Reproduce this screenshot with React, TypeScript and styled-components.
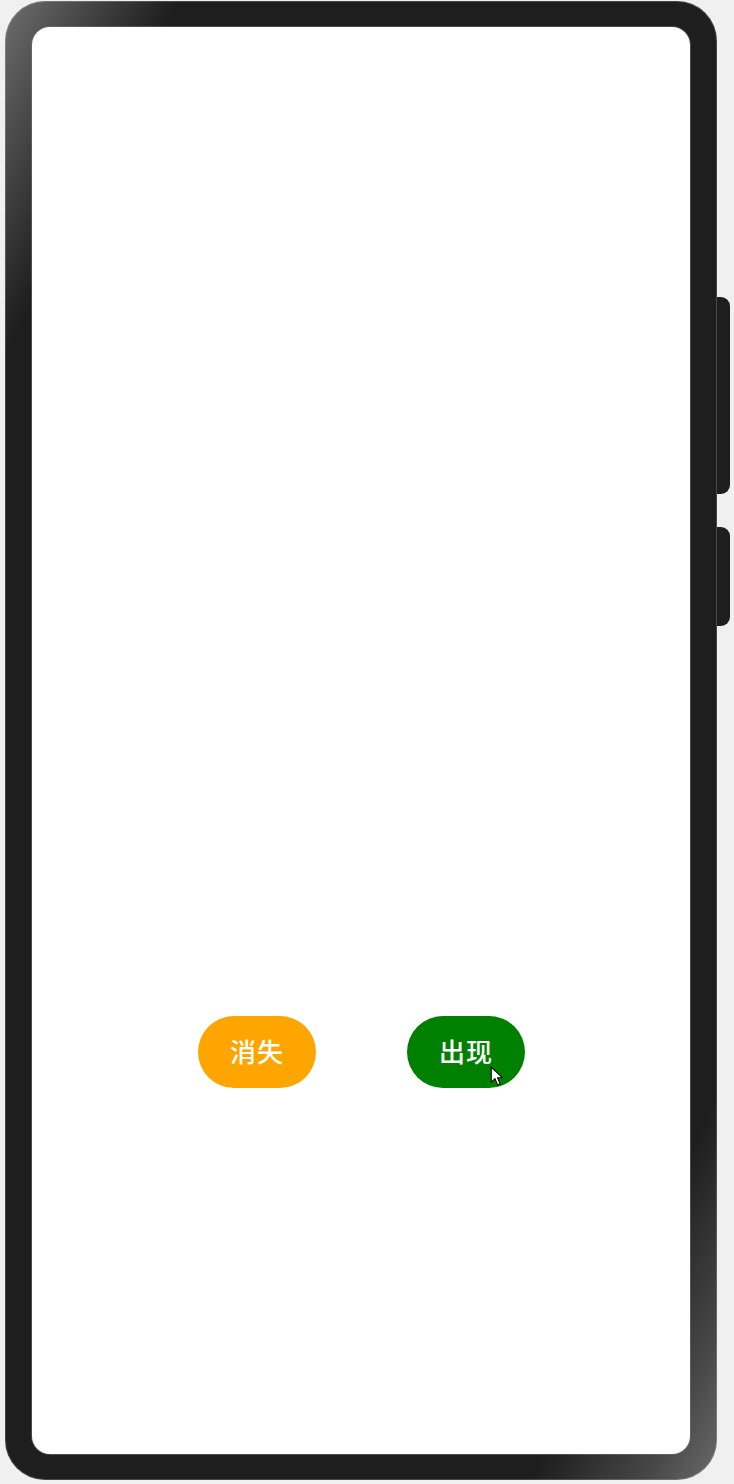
import styled, { createGlobalStyle } from 'styled-components';

const GlobalStyle = createGlobalStyle`
  html, body {
    margin: 0;
    padding: 0;
    background: #f0f0f0;
  }
  body {
    font-family: "Noto Sans CJK SC", "Noto Sans", sans-serif;
  }
`;

const Page = styled.div`
  width: 734px;
  height: 1484px;
  padding: 1px 0 0 5px;
  box-sizing: border-box;
  overflow: hidden;
`;

const PhoneFrame = styled.div`
  position: relative;
  width: 712px;
  height: 1479px;
  box-sizing: border-box;
  padding: 26px 27px;
  border-radius: 40px;
  background: linear-gradient(
    116deg,
    #6e6e6e 0%,
    #4c4c4c 5%,
    #1e1e1e 12%,
    #1e1e1e 87%,
    #474747 95%,
    #6a6a6a 100%
  );
  box-shadow: inset 0 0 0 1px rgba(255, 255, 255, 0.18);
`;

const SideKey = styled.div<{ $top: number; $height: number }>`
  position: absolute;
  left: 711px;
  top: ${(p) => p.$top}px;
  width: 14px;
  height: ${(p) => p.$height}px;
  background: #1e1e1e;
  border-radius: 0 9px 9px 0;
  box-shadow: inset 1px 0 0 rgba(255, 255, 255, 0.2);
`;

const Screen = styled.div`
  height: 100%;
  background: #ffffff;
  border-radius: 18px;
  display: flex;
  flex-direction: column;
  justify-content: flex-end;
  padding-bottom: 366px;
  box-sizing: border-box;
  box-shadow: 0 0 0 1px rgba(120, 120, 120, 0.5);
`;

const ButtonRow = styled.div`
  display: flex;
  justify-content: center;
  gap: 91px;
  padding-left: 1px;
`;

const PillButton = styled.button<{ $color: string }>`
  position: relative;
  width: 118px;
  height: 72px;
  border: none;
  border-radius: 36px;
  background: ${(p) => p.$color};
  color: #ffffff;
  font-family: "Noto Sans CJK SC", "Noto Sans", sans-serif;
  font-size: 26px;
  font-weight: 500;
  letter-spacing: 1px;
  line-height: 1;
  padding: 0 0 2px;
  cursor: pointer;
`;

const Cursor = styled.svg`
  position: absolute;
  left: 83px;
  top: 50px;
  width: 14px;
  height: 21px;
  pointer-events: none;
`;

export default function App() {
  return (
    <>
      <GlobalStyle />
      <Page>
        <PhoneFrame>
          <SideKey $top={296} $height={197} />
          <SideKey $top={526} $height={99} />
          <Screen>
            <ButtonRow>
              <PillButton $color="#ffa500">消失</PillButton>
              <PillButton $color="#008000">
                出现
                <Cursor viewBox="0 0 13 20">
                  <path
                    d="M1 1 L1 15.5 L4.6 12 L7 18 L9.4 17 L7 11.2 L11.8 11.2 Z"
                    fill="#ffffff"
                    stroke="#000000"
                    strokeWidth="1"
                    strokeLinejoin="round"
                  />
                </Cursor>
              </PillButton>
            </ButtonRow>
          </Screen>
        </PhoneFrame>
      </Page>
    </>
  );
}
